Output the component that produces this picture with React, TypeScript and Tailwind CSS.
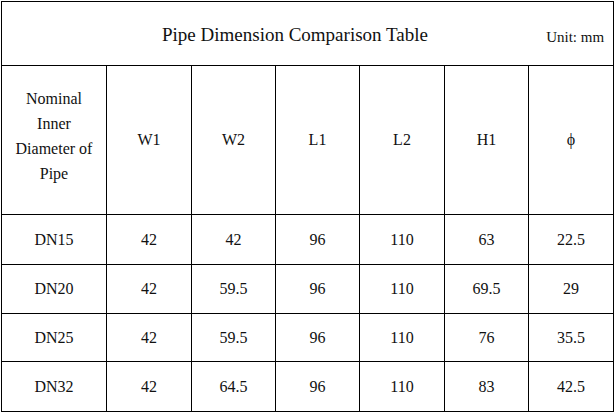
const columns = ["W1", "W2", "L1", "L2", "H1", "ϕ"];

const rows: { dn: string; values: string[]; height: string }[] = [
  { dn: "DN15", values: ["42", "42", "96", "110", "63", "22.5"], height: "h-[50px]" },
  { dn: "DN20", values: ["42", "59.5", "96", "110", "69.5", "29"], height: "h-[49px]" },
  { dn: "DN25", values: ["42", "59.5", "96", "110", "76", "35.5"], height: "h-[48px]" },
  { dn: "DN32", values: ["42", "64.5", "96", "110", "83", "42.5"], height: "h-[50px]" },
];

const cell = "border border-black p-0 text-center text-[16px] font-['Liberation_Serif',serif] text-[#111]";

export default function App() {
  return (
    <div className="w-[616px] h-[414px] bg-white p-px font-['Liberation_Serif',serif] text-[#111]">
      <table className="w-[613px] table-fixed border-collapse border border-black font-['Liberation_Serif',serif]">
        <colgroup>
          <col className="w-[105px]" />
          <col className="w-[85px]" />
          <col className="w-[84px]" />
          <col className="w-[84px]" />
          <col className="w-[85px]" />
          <col className="w-[84px]" />
          <col className="w-[85px]" />
        </colgroup>
        <tbody>
          <tr className="h-[64px]">
            <td colSpan={7} className="border border-black p-0 font-['Liberation_Serif',serif]">
              <div className="flex items-center">
                <span className="ml-[160px] pt-1 text-[19px]">Pipe Dimension Comparison Table</span>
                <span className="flex-1" />
                <span className="mr-[9px] pt-2 text-[15px]">Unit: mm</span>
              </div>
            </td>
          </tr>
          <tr className="h-[149px]">
            <td className={`${cell} pb-2 leading-[25px]`}>
              Nominal
              <br />
              Inner
              <br />
              Diameter of
              <br />
              Pipe
            </td>
            {columns.map((c) => (
              <td key={c} className={cell}>
                {c}
              </td>
            ))}
          </tr>
          {rows.map((r) => (
            <tr key={r.dn} className={r.height}>
              <td className={cell}>{r.dn}</td>
              {r.values.map((v, i) => (
                <td key={i} className={cell}>
                  {v}
                </td>
              ))}
            </tr>
          ))}
        </tbody>
      </table>
    </div>
  );
}
